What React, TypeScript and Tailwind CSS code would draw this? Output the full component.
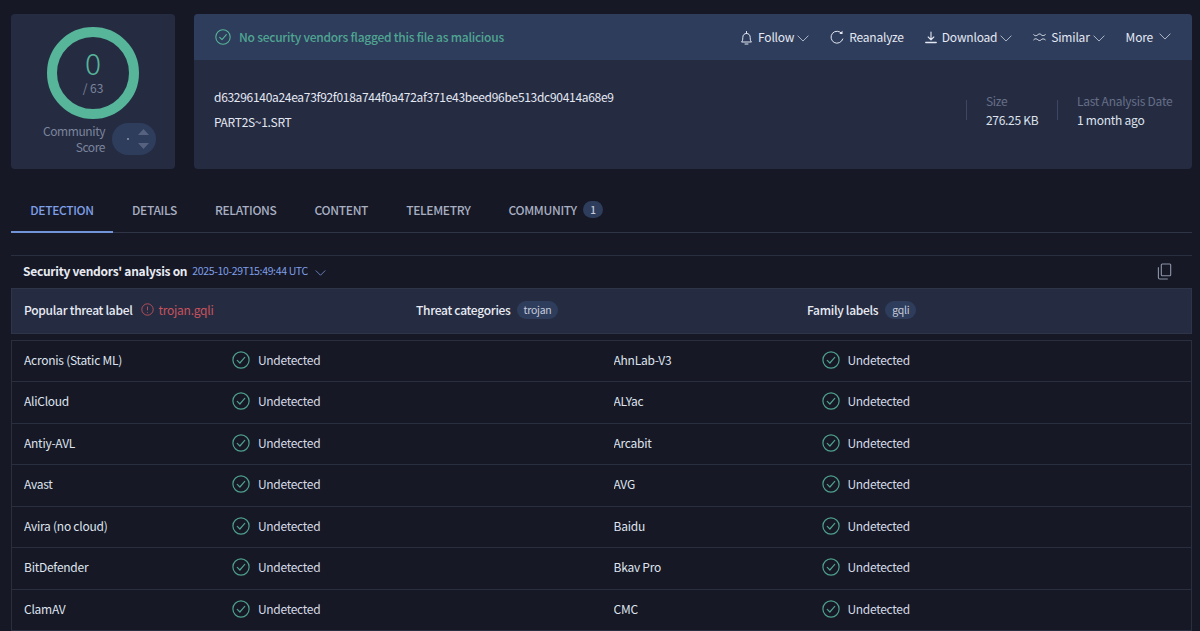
import type { ReactNode } from 'react';

const vendors = [
  ['Acronis (Static ML)', 'AhnLab-V3'],
  ['AliCloud', 'ALYac'],
  ['Antiy-AVL', 'Arcabit'],
  ['Avast', 'AVG'],
  ['Avira (no cloud)', 'Baidu'],
  ['BitDefender', 'Bkav Pro'],
  ['ClamAV', 'CMC'],
];

const tabs = ['RELATIONS', 'CONTENT', 'TELEMETRY'];

function CheckCircle({ className }: { className: string }) {
  return (
    <svg viewBox="0 0 24 24" fill="none" stroke="currentColor" strokeWidth="1.6" className={className}>
      <circle cx="12" cy="12" r="10.800" />
      <path d="M7 12.500l3.500 3.500 6.500-7.500" strokeLinecap="round" strokeLinejoin="round" />
    </svg>
  );
}

function Chevron({ className }: { className: string }) {
  return (
    <svg viewBox="0 0 14 8" fill="none" stroke="currentColor" strokeWidth="1" className={className}>
      <path d="M1 1l6 6 6-6" strokeLinecap="round" strokeLinejoin="round" />
    </svg>
  );
}

function Action({ icon, label, chevron = true }: { icon: ReactNode; label: string; chevron?: boolean }) {
  return (
    <div className="flex items-center text-[12px] tracking-[-0.2px] text-[#e4e8f2]">
      {icon}
      <span className="ml-[5px]">{label}</span>
      {chevron && <Chevron className="ml-[3px] mt-[3px] h-[7px] w-[12px] text-[#c5cbdb]" />}
    </div>
  );
}

function Result({ name }: { name: string }) {
  return (
    <div className="flex w-1/2 items-center pb-[2px] pl-[12px]">
      <div className="w-[208px] truncate text-[12px] tracking-[-0.25px] text-[#dfe3ee]">{name}</div>
      <CheckCircle className="h-[18px] w-[18px] text-[#4f9f8c]" />
      <span className="ml-[8px] text-[12px] tracking-[-0.3px] text-[#d5dae6]">Undetected</span>
    </div>
  );
}

export default function App() {
  return (
    <div
      className="h-[631px] w-[1200px] overflow-hidden bg-[#161825] pl-[11px] pr-[8px] pt-[14px]"
      style={{ fontFamily: '"Noto Sans CJK JP", "Noto Sans", sans-serif' }}
    >
      {/* Top cards */}
      <div className="flex h-[155px] gap-[19px]">
        <div className="flex w-[164px] flex-col items-center rounded-[4px] bg-[#252c42] pt-[13px]">
          <div className="flex h-[92px] w-[92px] flex-col items-center justify-center rounded-full border-[10px] border-[#57b59a]">
            <div className="mt-[-4px] text-[30px] font-light leading-[30px] text-[#57b59a]">0</div>
            <div className="mt-[3px] text-[12px] leading-[15px] text-[#7c849c]">/ 63</div>
          </div>
          <div className="ml-[13px] mt-[4px] flex items-start gap-[7px]">
            <div className="text-right text-[12px] leading-[16px] tracking-[-0.4px] text-[#7c849c]">
              Community
              <br />
              Score
            </div>
            <div className="flex h-[32px] w-[44px] items-center justify-between rounded-full bg-[#2e3d5c] pl-[15px] pr-[7px]">
              <span className="h-[2px] w-[2px] rounded-full bg-[#8f97ad]" />
              <svg viewBox="0 0 11 22" fill="#56627f" className="h-[22px] w-[11px]">
                <path d="M5.500 1L11 7H0z" />
                <path d="M0 15h11l-5.500 6z" />
              </svg>
            </div>
          </div>
        </div>

        <div className="flex flex-1 flex-col overflow-hidden rounded-[4px] bg-[#252c42]">
          <div className="flex h-[46px] items-center justify-between bg-[#2e3d5c] pl-[21px] pr-[21px]">
            <div className="flex items-center">
              <CheckCircle className="h-[16px] w-[16px] text-[#57b59a]" />
              <span className="ml-[8px] text-[12px] font-medium tracking-[-0.25px] text-[#50a592]">
                No security vendors flagged this file as malicious
              </span>
            </div>
            <div className="flex items-center gap-[21px]">
              <Action
                label="Follow"
                icon={
                  <svg viewBox="0 0 13 15" fill="none" stroke="currentColor" className="h-[15px] w-[13px]">
                    <path d="M1.500 12h10c-1-1-1.300-2-1.300-4.500 0-2.500-1.500-4-3.700-4s-3.700 1.500-3.700 4c0 2.500-.3 3.500-1.300 4.500z" strokeLinejoin="round" />
                    <path d="M6.500 1.500v2M5 14h3" strokeLinecap="round" />
                  </svg>
                }
              />
              <Action
                label="Reanalyze"
                chevron={false}
                icon={
                  <svg viewBox="0 0 14 14" fill="none" stroke="currentColor" className="h-[14px] w-[14px]">
                    <path d="M11.800 3.500A6 6 0 1 0 12.800 9" strokeLinecap="round" />
                    <path d="M12.500.8v3.200H9.300" fill="currentColor" stroke="none" />
                  </svg>
                }
              />
              <Action
                label="Download"
                icon={
                  <svg viewBox="0 0 12 13" fill="none" stroke="currentColor" strokeWidth="1.100" className="h-[13px] w-[12px]">
                    <path d="M6 1v7.500M3.200 6L6 8.800 8.800 6" strokeLinecap="round" strokeLinejoin="round" />
                    <path d="M.8 11.500h10.400" strokeLinecap="round" strokeWidth="1.400" />
                  </svg>
                }
              />
              <Action
                label="Similar"
                icon={
                  <svg viewBox="0 0 13 10" fill="none" stroke="currentColor" className="h-[10px] w-[13px]">
                    <path d="M.5 2.500c1.500 1.500 2.500 1.500 4 .5 1.500-1.300 2.500-1.500 4 0 1 .8 2.500.8 4-.5" />
                    <path d="M.5 8c1.500-1.500 2.500-1.500 4-.5 1.500 1.300 2.500 1.500 4 0 1-.8 2.500-.8 4 .5" />
                  </svg>
                }
              />
              <div className="flex items-center text-[12px] tracking-[-0.2px] text-[#e4e8f2]">
                More
                <Chevron className="ml-[6px] mt-[-2px] h-[7px] w-[12px] text-[#c5cbdb]" />
              </div>
            </div>
          </div>
          <div className="flex flex-1 items-center justify-between pb-[11px] pl-[20px] pr-[19px]">
            <div>
              <div className="text-[12px] leading-[18px] tracking-[-0.3px] text-[#e4e8f2]">
                d63296140a24ea73f92f018a744f0a472af371e43beed96be513dc90414a68e9
              </div>
              <div className="mt-[7px] text-[12px] leading-[18px] tracking-[-0.3px] text-[#e4e8f2]">PART2S~1.SRT</div>
            </div>
            <div className="mt-[2px] flex items-center tracking-[-0.3px]">
              <div className="h-[20px] w-px bg-[#3d4763]" />
              <div className="ml-[19px] w-[71px] text-[12px] leading-[19px]">
                <div className="text-[#666f88]">Size</div>
                <div className="text-[#dfe3ee]">276.25 KB</div>
              </div>
              <div className="h-[20px] w-px bg-[#3d4763]" />
              <div className="ml-[19px] w-[96px] whitespace-nowrap text-[12px] leading-[19px] tracking-[-0.25px]">
                <div className="text-[#666f88]">Last Analysis Date</div>
                <div className="text-[#dfe3ee]">1 month ago</div>
              </div>
            </div>
          </div>
        </div>
      </div>

      {/* Tabs */}
      <div className="mt-[18px] flex h-[46px] items-stretch border-b border-[#2f3547] text-[12px] font-medium tracking-[-0.33px] text-[#a8afc2]">
        <div className="mb-[-1px] flex w-[102px] items-center justify-center border-b-2 border-[#7393d8] pt-[2px] text-[#7f9fe6]">DETECTION</div>
        <div className="ml-[19px] flex items-center">DETAILS</div>
        {tabs.map((tab) => (
          <div key={tab} className="ml-[38px] flex items-center">
            {tab}
          </div>
        ))}
        <div className="ml-[38px] flex items-center">
          COMMUNITY
          <span className="ml-[6px] flex h-[17px] w-[20px] items-center justify-center rounded-full bg-[#2e3d5c] text-[10px] text-[#c5cbdb]">1</span>
        </div>
      </div>

      {/* Section */}
      <div className="mt-[22px] flex h-[33px] items-center justify-between border-t border-[#2a2f40] pb-[2px] pl-[12px] pr-[20px]">
        <div className="flex items-center">
          <span className="text-[12px] font-bold tracking-[-0.28px] text-[#e8ebf3]">Security vendors' analysis on</span>
          <span className="ml-[5px] text-[10.500px] tracking-[-0.35px] text-[#7f9fe6]">2025-10-29T15:49:44 UTC</span>
          <Chevron className="ml-[7px] mt-[4px] h-[6px] w-[11px] text-[#7f9fe6]" />
        </div>
        <svg viewBox="0 0 16 18" fill="none" stroke="#8b93a8" strokeWidth="1.200" className="h-[17px] w-[15px]">
          <rect x="4.600" y="1" width="10" height="12.500" rx="1" />
          <path d="M1.500 4.500v11a1.500 1.500 0 0 0 1.500 1.500h8.500" />
        </svg>
      </div>

      <div className="flex h-[46px] items-center border border-[#2e3548] bg-[#252c42] pb-[3px] pl-[12px] text-[12px] font-medium tracking-[-0.28px] text-[#e8ebf3]">
        <div className="flex w-[392px] items-center">
          <span>Popular threat label</span>
          <svg viewBox="0 0 24 24" fill="none" stroke="#c9525c" strokeWidth="1.600" className="ml-[9px] h-[13px] w-[13px]">
            <circle cx="12" cy="12" r="10.500" />
            <path d="M12 6.500v7M12 16.500v1.500" />
          </svg>
          <span className="ml-[4px] text-[12px] font-normal tracking-[-0.25px] text-[#c9525c]">trojan.gqli</span>
        </div>
        <div className="flex w-[391px] items-center">
          <span>Threat categories</span>
          <span className="ml-[6px] rounded-full bg-[#2e3d5c] px-[7px] text-[10.500px] font-normal leading-[18px] text-[#c5cbdb]">trojan</span>
        </div>
        <div className="flex items-center">
          <span>Family labels</span>
          <span className="ml-[7px] rounded-full bg-[#2e3d5c] px-[7px] text-[10.500px] font-normal leading-[18px] text-[#c5cbdb]">gqli</span>
        </div>
      </div>

      {/* Results */}
      <div className="mt-[5.500px] border-x border-t border-[#2a2f40]">
        {vendors.map(([left, right]) => (
          <div key={left} className="flex h-[41.500px] border-b border-[#2a2f40]">
            <Result name={left} />
            <Result name={right} />
          </div>
        ))}
      </div>
    </div>
  );
}
